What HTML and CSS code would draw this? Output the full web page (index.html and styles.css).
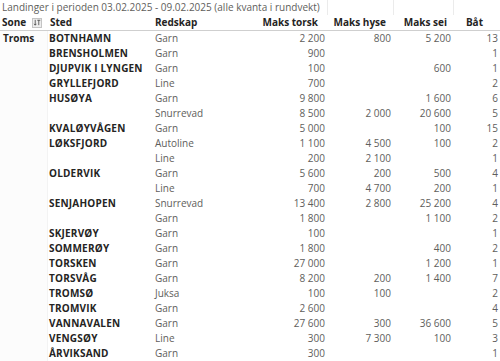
FILE: index.html
```html
<!DOCTYPE html>
<html lang="no">
<head>
<meta charset="utf-8">
<title>Landinger</title>
<link rel="stylesheet" href="styles.css">
</head>
<body>
<div class="matrix">
  <div class="title-row">
    <div class="title">Landinger i perioden 03.02.2025 - 09.02.2025 (alle kvanta i rundvekt)</div>
    <div class="gcell"></div>
    <div class="gcell"></div>
    <div class="gcell"></div>
  </div>
  <div class="head-row">
    <div class="hc sone">Sone
      <span class="filter"><svg width="9" height="9" viewBox="0 0 9 9"><path d="M2.5 1.5v6M1.2 6l1.3 1.5L3.8 6" fill="none" stroke="#444" stroke-width="0.9"/><path d="M4.8 2h3.4M6.5 2v5.5" fill="none" stroke="#444" stroke-width="0.9"/></svg></span>
    </div>
    <div class="hc">Sted</div>
    <div class="hc">Redskap</div>
    <div class="hc num p-torsk">Maks torsk</div>
    <div class="hc num p-hyse">Maks hyse</div>
    <div class="hc num p-sei">Maks sei</div>
    <div class="hc num p-bat">Båt</div>
  </div>
  <div class="body">
    <div class="sone-col">Troms</div>
    <div class="rows">
      <div class="row"><span class="sted">BOTNHAMN</span><span class="red">Garn</span><span class="n">2 200</span><span class="n">800</span><span class="n">5 200</span><span class="n">13</span></div>
      <div class="row"><span class="sted">BRENSHOLMEN</span><span class="red">Garn</span><span class="n">900</span><span class="n"></span><span class="n"></span><span class="n">1</span></div>
      <div class="row"><span class="sted">DJUPVIK I LYNGEN</span><span class="red">Garn</span><span class="n">100</span><span class="n"></span><span class="n">600</span><span class="n">1</span></div>
      <div class="row"><span class="sted">GRYLLEFJORD</span><span class="red">Line</span><span class="n">700</span><span class="n"></span><span class="n"></span><span class="n">2</span></div>
      <div class="row"><span class="sted">HUSØYA</span><span class="red">Garn</span><span class="n">9 800</span><span class="n"></span><span class="n">1 600</span><span class="n">6</span></div>
      <div class="row"><span class="sted"></span><span class="red">Snurrevad</span><span class="n">8 500</span><span class="n">2 000</span><span class="n">20 600</span><span class="n">5</span></div>
      <div class="row"><span class="sted">KVALØYVÅGEN</span><span class="red">Garn</span><span class="n">5 000</span><span class="n"></span><span class="n">100</span><span class="n">15</span></div>
      <div class="row"><span class="sted">LØKSFJORD</span><span class="red">Autoline</span><span class="n">1 100</span><span class="n">4 500</span><span class="n">100</span><span class="n">2</span></div>
      <div class="row"><span class="sted"></span><span class="red">Line</span><span class="n">200</span><span class="n">2 100</span><span class="n"></span><span class="n">1</span></div>
      <div class="row"><span class="sted">OLDERVIK</span><span class="red">Garn</span><span class="n">5 600</span><span class="n">200</span><span class="n">500</span><span class="n">4</span></div>
      <div class="row"><span class="sted"></span><span class="red">Line</span><span class="n">700</span><span class="n">4 700</span><span class="n">200</span><span class="n">1</span></div>
      <div class="row"><span class="sted">SENJAHOPEN</span><span class="red">Snurrevad</span><span class="n">13 400</span><span class="n">2 800</span><span class="n">25 200</span><span class="n">4</span></div>
      <div class="row"><span class="sted"></span><span class="red">Garn</span><span class="n">1 800</span><span class="n"></span><span class="n">1 100</span><span class="n">2</span></div>
      <div class="row"><span class="sted">SKJERVØY</span><span class="red">Garn</span><span class="n">100</span><span class="n"></span><span class="n"></span><span class="n">1</span></div>
      <div class="row"><span class="sted">SOMMERØY</span><span class="red">Garn</span><span class="n">1 800</span><span class="n"></span><span class="n">400</span><span class="n">2</span></div>
      <div class="row"><span class="sted">TORSKEN</span><span class="red">Garn</span><span class="n">27 000</span><span class="n"></span><span class="n">1 200</span><span class="n">1</span></div>
      <div class="row"><span class="sted">TORSVÅG</span><span class="red">Garn</span><span class="n">8 200</span><span class="n">200</span><span class="n">1 400</span><span class="n">7</span></div>
      <div class="row"><span class="sted">TROMSØ</span><span class="red">Juksa</span><span class="n">100</span><span class="n">100</span><span class="n"></span><span class="n">2</span></div>
      <div class="row"><span class="sted">TROMVIK</span><span class="red">Garn</span><span class="n">2 600</span><span class="n"></span><span class="n"></span><span class="n">4</span></div>
      <div class="row"><span class="sted">VANNAVALEN</span><span class="red">Garn</span><span class="n">27 600</span><span class="n">300</span><span class="n">36 600</span><span class="n">5</span></div>
      <div class="row"><span class="sted">VENGSØY</span><span class="red">Line</span><span class="n">300</span><span class="n">7 300</span><span class="n">100</span><span class="n">3</span></div>
      <div class="row"><span class="sted">ÅRVIKSAND</span><span class="red">Garn</span><span class="n">300</span><span class="n"></span><span class="n"></span><span class="n">1</span></div>
    </div>
  </div>
</div>
</body>
</html>
```
FILE: styles.css
```css
html, body {
  margin: 0;
  padding: 0;
  background: #ffffff;
}
body {
  width: 500px;
  height: 361px;
  overflow: hidden;
  font-family: "Open Sans", "DejaVu Sans", sans-serif;
  font-size: 10px;
  color: #605e5c;
}
.matrix {
  display: flex;
  flex-direction: column;
}
.title-row {
  display: grid;
  grid-template-columns: 327px 66px 60px 47px;
  height: 15px;
}
.title {
  line-height: 15px;
  padding-left: 2px;
  color: #605e5c;
  white-space: nowrap;
}
.gcell {
  border-left: 1px solid #ebebeb;
}
.head-row {
  display: grid;
  grid-template-columns: 48px 105px 107px 67px 66px 60px 47px;
  height: 15px;
  border-bottom: 1px solid #cfcfcf;
}
.hc {
  font-weight: 700;
  color: #252423;
  line-height: 15px;
  padding-left: 2px;
  white-space: nowrap;
}
.hc.sone {
  display: flex;
  align-items: center;
  gap: 6px;
}
.filter {
  display: inline-flex;
  width: 10px;
  height: 10px;
  align-items: center;
  justify-content: center;
  background: #ededed;
  border: 1px solid #c4c4c4;
  box-sizing: border-box;
}
.hc.num { text-align: right; padding-left: 0; }
.p-torsk { padding-right: 9px; }
.p-hyse { padding-right: 7px; }
.p-sei { padding-right: 6px; }
.p-bat { padding-right: 17px; }
.body {
  display: grid;
  grid-template-columns: 48px 452px;
  border-bottom: 1px solid #e6e6e6;
}
.sone-col {
  font-weight: 700;
  color: #252423;
  line-height: 15px;
  padding-left: 3px;
  border-right: 1px solid #f3f3f3;
  background: #fcfcfc;
}
.rows {
  display: flex;
  flex-direction: column;
}
.row {
  display: grid;
  grid-template-columns: 105px 107px 67px 66px 60px 47px;
  height: 15px;
  line-height: 15px;
  white-space: nowrap;
}
.sted {
  font-weight: 700;
  color: #252423;
  padding-left: 1px;
  letter-spacing: 0.2px;
}
.red {
  padding-left: 2px;
  color: #605e5c;
}
.n {
  text-align: right;
  padding-right: 2px;
  color: #605e5c;
}
```
